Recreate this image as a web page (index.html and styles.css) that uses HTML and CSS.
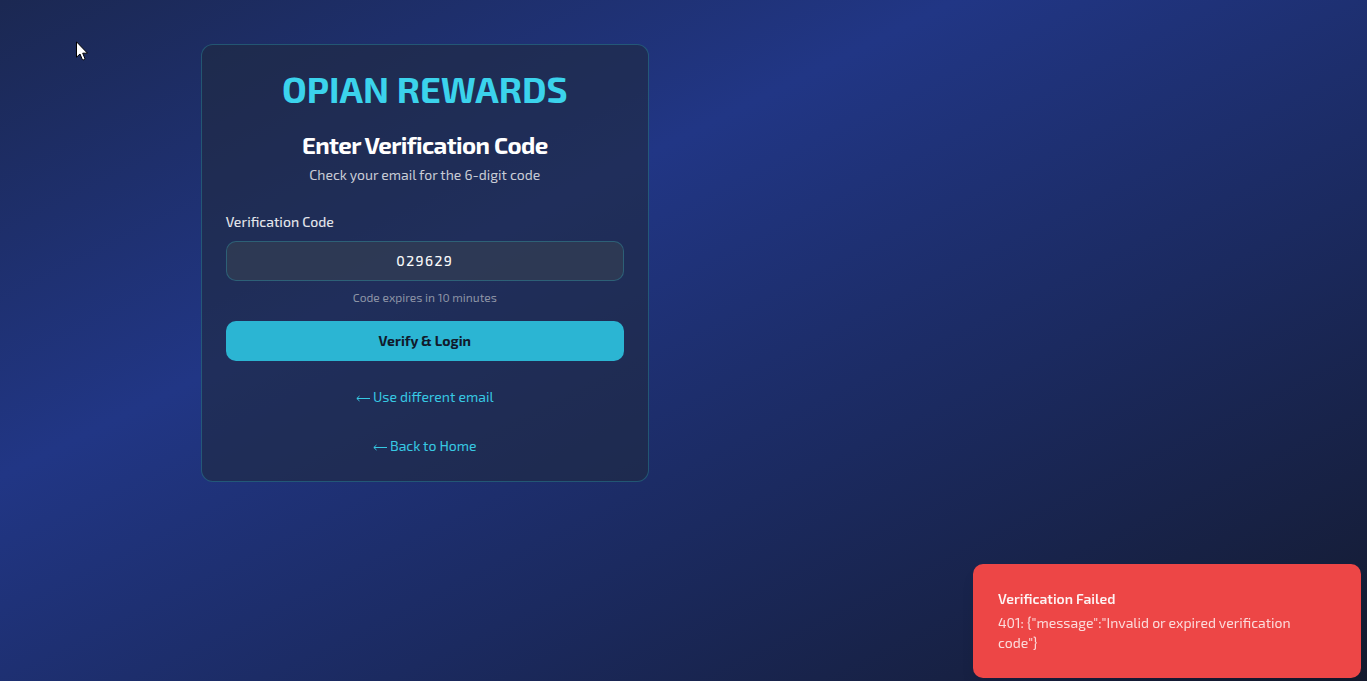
FILE: index.html
```html
<!DOCTYPE html>
<html lang="en">
<head>
<meta charset="utf-8">
<meta name="viewport" content="width=device-width, initial-scale=1">
<title>Opian Rewards</title>
<link rel="stylesheet" href="styles.css">
</head>
<body>
<main class="page">
  <section class="card">
    <header class="card-header">
      <h1 class="brand">OPIAN REWARDS</h1>
      <h2 class="title">Enter Verification Code</h2>
      <p class="subtitle">Check your email for the 6-digit code</p>
    </header>
    <form class="form">
      <label class="label" for="code">Verification Code</label>
      <input class="code" id="code" type="text" inputmode="numeric" maxlength="6" value="029629">
      <p class="hint">Code expires in 10 minutes</p>
      <button class="submit" type="submit">Verify &amp; Login</button>
    </form>
    <nav class="links">
      <a class="link" href="#email"><svg class="arrow" viewBox="0 0 14 10" aria-hidden="true"><path d="M14 6.500H1M3.500 4L.8 6.500L3.500 9"/></svg>Use different email</a>
      <a class="link" href="#home"><svg class="arrow" viewBox="0 0 14 10" aria-hidden="true"><path d="M14 6.500H1M3.500 4L.8 6.500L3.500 9"/></svg>Back to Home</a>
    </nav>
  </section>
</main>
<div class="toast" role="alert">
  <p class="toast-title">Verification Failed</p>
  <p class="toast-text">401: {"message":"Invalid or expired verification code"}</p>
</div>
<svg class="cursor" viewBox="0 0 12 20" aria-hidden="true"><path d="M.5.8V16.200L4 13L6.300 18.500Q7.500 19.500 9 17.800L6.700 12.200H11.500Z"/></svg>
</body>
</html>
```
FILE: styles.css
```css
* {
  box-sizing: border-box;
  margin: 0;
}

body {
  min-height: 100vh;
  background: linear-gradient(to bottom right, #1b2852 0%, #213685 35%, #1b2a60 64%, #141a2e 100%);
  color: #f9fafb;
  font-family: "Exo 2", Roboto, sans-serif;
  font-size: 14px;
  line-height: 20px;
}

.page {
  width: 62.15%;
  padding: 44px 16px;
}

.card {
  max-width: 448px;
  margin: 0 auto;
  padding: 24px;
  border: 1px solid rgba(45, 190, 200, 0.3);
  border-radius: 12px;
  background: rgba(32, 42, 64, 0.6);
}

.card-header {
  text-align: center;
}

.brand {
  color: #3bd3ec;
  font-size: 36px;
  font-weight: 700;
  line-height: 40px;
}

.title {
  margin-top: 24px;
  color: #fff;
  font-size: 24px;
  font-weight: 700;
  line-height: 24px;
  letter-spacing: -0.6px;
}

.subtitle {
  margin-top: 8px;
  color: #c9ccd6;
}

.form {
  display: flex;
  flex-direction: column;
  margin-top: 27px;
}

.label {
  color: #e2e4ea;
  font-weight: 500;
}

.code {
  width: 100%;
  height: 40px;
  margin-top: 9px;
  padding: 8px 12px 10px;
  border: 1px solid rgba(45, 190, 200, 0.3);
  border-radius: 10px;
  background: rgba(55, 65, 81, 0.6);
  color: #f9fafb;
  font: inherit;
  font-weight: 500;
  letter-spacing: 1.4px;
  text-align: center;
  outline: none;
}

.hint {
  margin-top: 8px;
  color: #8d94a6;
  font-size: 12px;
  line-height: 16px;
  text-align: center;
}

.submit {
  height: 40px;
  margin-top: 16px;
  border: 0;
  border-radius: 10px;
  background: #2bb5d3;
  color: #111a2c;
  font: inherit;
  font-weight: 700;
}

.links {
  display: flex;
  flex-direction: column;
  align-items: center;
  gap: 29px;
  padding: 26px 0 1px;
}

.link {
  display: flex;
  align-items: center;
  gap: 3px;
  color: #37c9e3;
  text-decoration: none;
}

.arrow {
  width: 14px;
  height: 10px;
  fill: none;
  stroke: currentColor;
}

.toast {
  position: fixed;
  right: 6px;
  bottom: 3px;
  width: 388px;
  padding: 25px 48px 25px 25px;
  border-radius: 10px;
  background: #ed4646;
  box-shadow: 0 10px 15px -3px rgba(0, 0, 0, 0.1);
}

.toast-title {
  color: #fdf3f3;
  font-weight: 600;
}

.toast-text {
  margin-top: 4px;
  color: #fbdcdc;
}

.cursor {
  position: fixed;
  left: 76px;
  top: 41px;
  width: 12px;
  height: 20px;
  fill: #fff;
  stroke: #000;
}
```
